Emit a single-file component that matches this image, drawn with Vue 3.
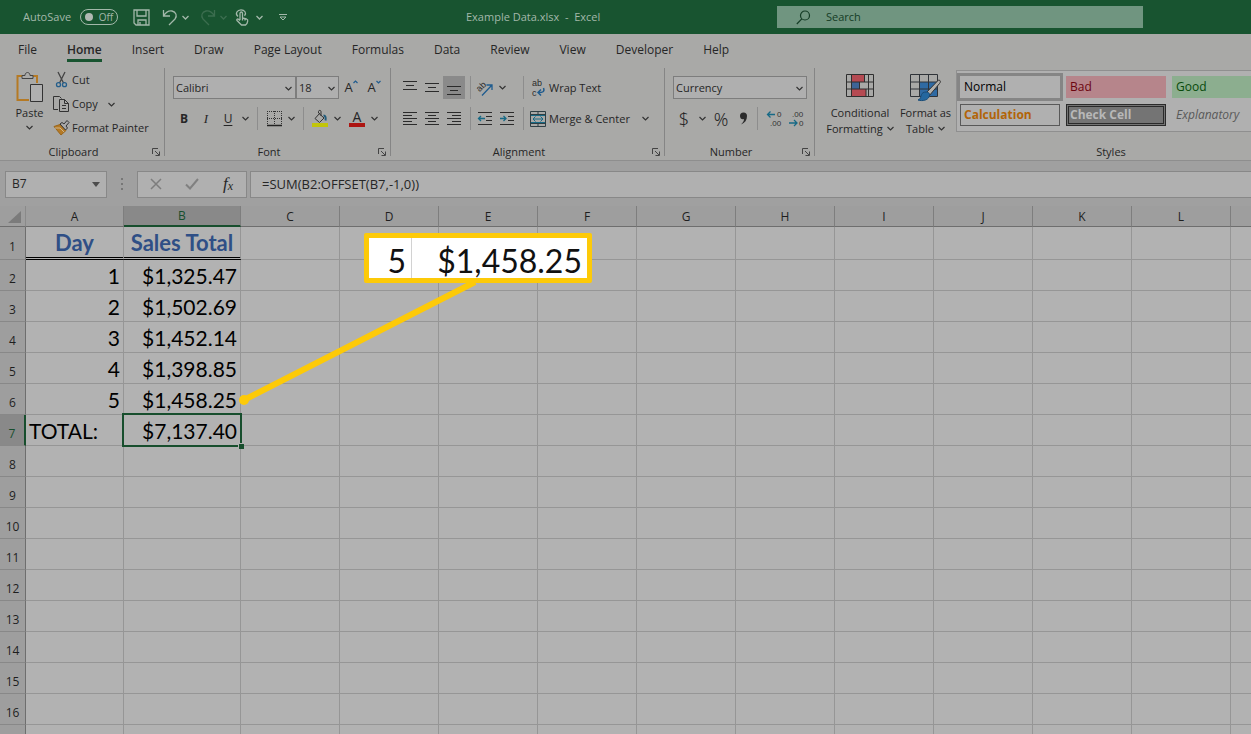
<script setup>
import { ref } from 'vue'

const tabs = ['File', 'Home', 'Insert', 'Draw', 'Page Layout', 'Formulas', 'Data', 'Review', 'View', 'Developer', 'Help']
const activeTab = ref('Home')
const columns = ['A', 'B', 'C', 'D', 'E', 'F', 'G', 'H', 'I', 'J', 'K', 'L', '']
const rows = ref([
  ['Day', 'Sales Total'],
  ['1', '$1,325.47'],
  ['2', '$1,502.69'],
  ['3', '$1,452.14'],
  ['4', '$1,398.85'],
  ['5', '$1,458.25'],
  ['TOTAL:', '$7,137.40'],
  [], [], [], [], [], [], [], [], [],
])
const formula = ref('=SUM(B2:OFFSET(B7,-1,0))')
const cellName = ref('B7')
const query = ref('')
const verticalAligns = [
  { name: 'Top align', d: 'M1 2.5h14M4 6.500h8M1 10.500h14' },
  { name: 'Middle align', d: 'M1 4.500h14M4 8.500h8M1 12.500h14' },
  { name: 'Bottom align', d: 'M1 7.500h14M4 11.500h8M1 15.500h14' },
]
const horizontalAligns = [
  { name: 'Align left', d: 'M1 1.500h14M1 4.500h9M1 7.500h14M1 10.500h9M1 13.500h14' },
  { name: 'Center', d: 'M1 1.500h14M4 4.500h8M1 7.500h14M4 10.500h8M1 13.500h14' },
  { name: 'Align right', d: 'M1 1.500h14M6 4.500h9M1 7.500h14M6 10.500h9M1 13.500h14' },
]
</script>

<template>
  <div class="app">
    <header class="titlebar">
      <div class="quick">
        <label class="autosave" for="autosave">AutoSave</label>
        <button id="autosave" class="toggle" type="button"><span class="knob"></span>Off</button>
        <button class="q save" type="button" aria-label="Save">
          <svg width="17" height="17" viewBox="0 0 17 17"><path d="M1 1h15v15H3l-2-2zM4 1v6h9V1M5 16v-5h8v5M7 13v3" /></svg>
        </button>
        <button class="q undo" type="button" aria-label="Undo">
          <svg width="16" height="17" viewBox="0 0 16 17"><path d="M1.500 1v6H8M1.500 7C4 3 7 1.500 10 2c4 .7 5.500 5 3 8l-6 6" /></svg>
        </button>
        <button class="q drop" type="button" aria-label="Undo history"><svg width="7" height="5" viewBox="0 0 7 5"><path d="M.5 1l3 3 3-3" /></svg></button>
        <button class="q redo dim" type="button" aria-label="Redo">
          <svg width="16" height="17" viewBox="0 0 16 17"><path d="M14.500 1v6H8M14.500 7C12 3 9 1.500 6 2c-4 .7-5.500 5-3 8l6 6" /></svg>
        </button>
        <button class="q drop dim" type="button" aria-label="Redo history"><svg width="7" height="5" viewBox="0 0 7 5"><path d="M.5 1l3 3 3-3" /></svg></button>
        <button class="q touch" type="button" aria-label="Touch mode">
          <svg width="14" height="17" viewBox="0 0 14 17"><path d="M5 11V4.500c0-2 2.500-2 2.500 0V9l4 1c1 .3 1.500 1 1.200 2L12 14.500 10.500 16h-4L2 11.500c-.8-1 .5-2 1.500-1.200L5 11.500M7.500 9v2.500M10 9.500v2M3 7.500C-.5 4.500 2.500.8 6 .8s6 3.200 3.500 6" /></svg>
        </button>
        <button class="q drop" type="button" aria-label="Touch options"><svg width="7" height="5" viewBox="0 0 7 5"><path d="M.5 1l3 3 3-3" /></svg></button>
        <button class="q custom" type="button" aria-label="Customize toolbar"><svg width="8" height="8" viewBox="0 0 8 8"><path d="M0 1.500h8M1 4l3 3 3-3z" /></svg></button>
      </div>
      <div class="doc-title">Example Data.xlsx&nbsp; -&nbsp; Excel</div>
      <label class="search">
        <svg width="15" height="15" viewBox="0 0 15 15"><circle cx="9" cy="5.500" r="4.500" /><path d="M5.800 8.800L.8 14" /></svg>
        <input v-model="query" type="text" placeholder="Search" aria-label="Search" />
      </label>
    </header>

    <nav class="tabs">
      <button v-for="t in tabs" :key="t" type="button" class="tab" :class="{ active: t === activeTab }" @click="activeTab = t">{{ t }}</button>
    </nav>

    <section class="ribbon">
      <div class="group clipboard">
        <div class="body">
          <button class="paste" type="button">
            <svg width="28" height="31" viewBox="0 0 28 31">
              <path d="M6 4H1.500v24H13M16 4h5v7" fill="none" stroke="#b57a25" stroke-width="2" />
              <path d="M6 6.500V3.500h3c0-4 5-4 5 0h3v3z" fill="#aaaaa8" stroke="#444" />
              <path d="M14.500 12.500h12v17h-12z" fill="#b0b0b0" stroke="#333" />
            </svg>
            <span>Paste</span>
            <svg class="chev" width="7" height="5" viewBox="0 0 7 5"><path d="M.5 1l3 3 3-3" /></svg>
          </button>
          <div class="clip-list">
            <button type="button" class="line">
              <svg width="18" height="16" viewBox="0 0 18 16"><path d="M5 0l5.500 11M12 0L6.500 11" fill="none" stroke="#444" stroke-width="1.300" /><circle cx="5.500" cy="12.700" r="2" fill="none" stroke="#245e8b" stroke-width="1.300" /><circle cx="11.500" cy="12.700" r="2" fill="none" stroke="#245e8b" stroke-width="1.300" /></svg>
              Cut
            </button>
            <button type="button" class="line">
              <svg width="18" height="16" viewBox="0 0 18 16"><path d="M5 13.500H.5v-13h6l2 2M6.500 3.500h5l4 4v8h-9zM11.500 3.500v4h4M9 9.500h4M9 12.500h4" fill="none" stroke="#333" /></svg>
              Copy
              <svg class="chev after" width="7" height="5" viewBox="0 0 7 5"><path d="M.5 1l3 3 3-3" /></svg>
            </button>
            <button type="button" class="line">
              <svg width="18" height="16" viewBox="0 0 18 16"><path d="M1 6.500l6-2 6 6-5 4.500z" fill="#b57a25" stroke="#9a661b" /><path d="M2 8l5 0 4 4" fill="none" stroke="#ccb58f" /><path d="M7 4l2-1.500 2 1.500 3-3.500 2 2L13 6l1.500 2-2 2z" fill="#aaa" stroke="#333" /></svg>
              Format Painter
            </button>
          </div>
        </div>
        <footer><span>Clipboard</span><button class="launch" type="button" aria-label="Clipboard settings"><svg width="8" height="8" viewBox="0 0 8 8"><path d="M.5 6V.5H6M3 3l4 4M7.500 3.500v4h-4" /></svg></button></footer>
      </div>

      <div class="group font">
        <div class="stack">
          <div class="row">
            <span class="pick family"><select aria-label="Font"><option>Calibri</option></select><svg class="chev" width="7" height="5" viewBox="0 0 7 5"><path d="M.5 1l3 3 3-3" /></svg></span>
            <span class="pick size"><select aria-label="Font size"><option>18</option></select><svg class="chev" width="7" height="5" viewBox="0 0 7 5"><path d="M.5 1l3 3 3-3" /></svg></span>
            <button class="ic grow" type="button" aria-label="Increase font size"><span>A</span><svg width="5" height="4" viewBox="0 0 5 4"><path d="M.5 3l2-2 2 2" /></svg></button>
            <button class="ic grow" type="button" aria-label="Decrease font size"><span>A</span><svg width="5" height="4" viewBox="0 0 5 4"><path d="M.5 1l2 2 2-2" /></svg></button>
          </div>
          <div class="row">
            <button class="ic bold" type="button">B</button>
            <button class="ic italic" type="button">I</button>
            <button class="ic under" type="button">U</button>
            <button class="dd" type="button" aria-label="Underline styles"><svg class="chev" width="7" height="5" viewBox="0 0 7 5"><path d="M.5 1l3 3 3-3" /></svg></button>
            <i class="sep"></i>
            <button class="ic" type="button" aria-label="Borders"><svg width="15" height="16" viewBox="0 0 15 16"><path d="M.5 0v14M14.500 0v14M7.500 0v14M0 .5h15M0 7.500h15" fill="none" stroke="#333" stroke-dasharray="1 1" /><path d="M0 14.500h15" stroke="#222" stroke-width="1.500" /></svg></button>
            <button class="dd" type="button" aria-label="Border styles"><svg class="chev" width="7" height="5" viewBox="0 0 7 5"><path d="M.5 1l3 3 3-3" /></svg></button>
            <i class="sep"></i>
            <button class="ic" type="button" aria-label="Fill color"><svg width="16" height="17" viewBox="0 0 16 17"><path d="M0 13h16v4H0z" fill="#c2c50a" /><path d="M8 3L3 8.500l4.500 4L12 8 6.500 3V1.500c0-1.500 2.500-1.500 2.500 0V6" fill="none" stroke="#333" /><path d="M11.500 5.500c2 0 2.500 2 2 5" fill="none" stroke="#205b7b" stroke-width="2" /></svg></button>
            <button class="dd" type="button" aria-label="Fill colors"><svg class="chev" width="7" height="5" viewBox="0 0 7 5"><path d="M.5 1l3 3 3-3" /></svg></button>
            <button class="ic fontcolor" type="button" aria-label="Font color"><span>A</span></button>
            <button class="dd" type="button" aria-label="Font colors"><svg class="chev" width="7" height="5" viewBox="0 0 7 5"><path d="M.5 1l3 3 3-3" /></svg></button>
          </div>
        </div>
        <footer><span>Font</span><button class="launch" type="button" aria-label="Font settings"><svg width="8" height="8" viewBox="0 0 8 8"><path d="M.5 6V.5H6M3 3l4 4M7.500 3.500v4h-4" /></svg></button></footer>
      </div>

      <div class="group alignment">
        <div class="stack">
          <div class="row">
            <button v-for="a in verticalAligns" :key="a.name" class="ic" :class="{ on: a.name === 'Bottom align' }" type="button" :aria-label="a.name"><svg width="16" height="18" viewBox="0 0 16 18"><path :d="a.d" stroke="#2b2b2b" /></svg></button>
            <i class="sep near"></i>
            <button class="ic" type="button" aria-label="Orientation"><svg width="18" height="18" viewBox="0 0 18 18"><text class="tiny" x="1" y="11" transform="rotate(-45 5 9)">ab</text><path d="M6 16.500L15.500 6.500M10.500 6h5.500v5" fill="none" stroke="#1f5c8f" stroke-width="1.300" /></svg></button>
            <button class="dd" type="button" aria-label="Orientation options"><svg class="chev" width="7" height="5" viewBox="0 0 7 5"><path d="M.5 1l3 3 3-3" /></svg></button>
            <i class="sep wide"></i>
            <button class="line" type="button"><svg width="16" height="20" viewBox="0 0 16 20"><text class="tiny" x="2" y="8">ab</text><text class="tiny" x="2" y="18">c</text><path d="M13.500 10c1.500 4-1 4.500-5 4.500M11 11.500l-3 3 3 3" fill="none" stroke="#1f5c8f" stroke-width="1.500" /></svg>Wrap Text</button>
          </div>
          <div class="row">
            <button v-for="a in horizontalAligns" :key="a.name" class="ic" type="button" :aria-label="a.name"><svg width="16" height="15" viewBox="0 0 16 15"><path :d="a.d" stroke="#2b2b2b" /></svg></button>
            <i class="sep near"></i>
            <button class="ic" type="button" aria-label="Decrease indent"><svg width="16" height="15" viewBox="0 0 16 15"><path d="M1 1.500h14M9 5.500h6M9 9.500h6M1 13.500h14" stroke="#2b2b2b" /><path d="M8 7.500H1.500M4 5L1.500 7.500 4 10" fill="none" stroke="#176a86" stroke-width="1.300" /></svg></button>
            <button class="ic" type="button" aria-label="Increase indent"><svg width="16" height="15" viewBox="0 0 16 15"><path d="M1 1.500h14M9 5.500h6M9 9.500h6M1 13.500h14" stroke="#2b2b2b" /><path d="M1 7.500h6M4.500 5L7 7.500 4.500 10" fill="none" stroke="#176a86" stroke-width="1.300" /></svg></button>
            <i class="sep merge"></i>
            <button class="line" type="button"><svg width="16" height="16" viewBox="0 0 16 16"><path d="M.5.5h15v15H.5zM.5 3.500h15M.5 12.500h15M8 0v3.500M8 12.500V16" fill="none" stroke="#2f3f44" /><path d="M1 4.500h14M1 11.500h14M3 8h10M5.500 5.500L3 8l2.500 2.500M10.500 5.500L13 8l-2.500 2.500" fill="none" stroke="#176a86" /></svg>Merge &amp; Center<svg class="chev after" width="7" height="5" viewBox="0 0 7 5"><path d="M.5 1l3 3 3-3" /></svg></button>
          </div>
        </div>
        <footer><span>Alignment</span><button class="launch" type="button" aria-label="Alignment settings"><svg width="8" height="8" viewBox="0 0 8 8"><path d="M.5 6V.5H6M3 3l4 4M7.500 3.500v4h-4" /></svg></button></footer>
      </div>

      <div class="group number">
        <div class="stack">
          <div class="row">
            <span class="pick format"><select aria-label="Number format"><option>Currency</option></select><svg class="chev" width="7" height="5" viewBox="0 0 7 5"><path d="M.5 1l3 3 3-3" /></svg></span>
          </div>
          <div class="row">
            <button class="ic big" type="button">$</button>
            <button class="dd acc" type="button" aria-label="Accounting formats"><svg class="chev" width="7" height="5" viewBox="0 0 7 5"><path d="M.5 1l3 3 3-3" /></svg></button>
            <button class="ic big" type="button">%</button>
            <button class="ic" type="button" aria-label="Comma style"><svg width="9" height="13" viewBox="0 0 9 13"><path d="M1 4a3.300 3.300 0 1 1 7 0c0 4-2 7-6 8.500C4 10.500 5 9 5 7 3 8 1 6.500 1 4z" fill="#2b2b2b" /></svg></button>
            <i class="sep near"></i>
            <button class="ic" type="button" aria-label="Increase decimal"><svg width="17" height="19" viewBox="0 0 17 19"><text class="dec" x="11" y="8">0</text><text class="dec" x="4" y="17">.00</text><path d="M9 5.500H1.500M4.500 2.500l-3 3 3 3" fill="none" stroke="#176a86" stroke-width="1.300" /></svg></button>
            <button class="ic" type="button" aria-label="Decrease decimal"><svg width="17" height="19" viewBox="0 0 17 19"><text class="dec" x="4" y="8">.00</text><text class="dec" x="11" y="17">0</text><path d="M1 14h8M6 11l3 3-3 3" fill="none" stroke="#176a86" stroke-width="1.300" /></svg></button>
          </div>
        </div>
        <footer><span>Number</span><button class="launch" type="button" aria-label="Number settings"><svg width="8" height="8" viewBox="0 0 8 8"><path d="M.5 6V.5H6M3 3l4 4M7.500 3.500v4h-4" /></svg></button></footer>
      </div>

      <div class="group styles">
        <div class="body">
          <button class="tall cond" type="button">
            <svg width="28" height="23" viewBox="0 0 28 23"><path d="M6 1h12v7H6zM6 15h14v7H6z" fill="#b54a52" /><path d="M6 8h7v7H6z" fill="#3d6496" /><path d="M.5.5h27v22H.5zM.5 8h27M.5 15h27M5.500 0v22M18.500 0v8M13.500 8v7M20 15v7M22.500 0v22" fill="none" stroke="#2f2f2f" /></svg>
            <span>Conditional<br />Formatting<svg class="chev" width="7" height="5" viewBox="0 0 7 5"><path d="M.5 1l3 3 3-3" /></svg></span>
          </button>
          <button class="tall fmt" type="button">
            <svg width="31" height="28" viewBox="0 0 31 28"><path d="M10 8h17v14H10z" fill="#2f6aa3" /><path d="M.5.5h27v22H.5zM.5 8h27M.5 15h27M9.500 0v22M18.500 0v22" fill="none" stroke="#2f3338" /><path d="M28.500 6c2 0 2.500 2 1 3.500L19 22l-3-3z" fill="#b4b0aa" stroke="#333" /><path d="M16 18c3 0 4.500 2 3 5-1.500 3-6 4.500-11 3 3-1 2.500-3 3.500-5.500.7-1.500 2-2.500 4.500-2.500z" fill="#24679f" stroke="#194c78" /></svg>
            <span>Format as<br />Table<svg class="chev" width="7" height="5" viewBox="0 0 7 5"><path d="M.5 1l3 3 3-3" /></svg></span>
          </button>
          <div class="gallery">
            <button type="button" class="normal">Normal</button>
            <button type="button" class="bad">Bad</button>
            <button type="button" class="good">Good</button>
            <button type="button" class="calc">Calculation</button>
            <button type="button" class="check">Check Cell</button>
            <button type="button" class="expl">Explanatory</button>
          </div>
        </div>
        <footer><span>Styles</span></footer>
      </div>
    </section>

    <section class="formula-bar">
      <label class="name-box"><input v-model="cellName" type="text" aria-label="Name box" /><svg width="8" height="5" viewBox="0 0 8 5"><path d="M0 0h8L4 5z" fill="#4d4d4d" /></svg></label>
      <svg class="dots" width="3" height="12" viewBox="0 0 3 12"><path d="M0 0h2v2H0zM0 5h2v2H0zM0 10h2v2H0z" fill="#777" /></svg>
      <div class="fx-box">
        <button type="button" aria-label="Cancel"><svg width="12" height="12" viewBox="0 0 12 12"><path d="M1 1l10 10M11 1L1 11" stroke="#7d7d7d" stroke-width="1.500" /></svg></button>
        <button type="button" aria-label="Enter"><svg width="14" height="12" viewBox="0 0 14 12"><path d="M1 6.500l4 4L13 1" fill="none" stroke="#808080" stroke-width="2" /></svg></button>
        <button type="button" class="fx" aria-label="Insert function">f<small>x</small></button>
      </div>
      <input v-model="formula" class="formula" type="text" aria-label="Formula" />
    </section>

    <main class="sheet">
      <table>
        <colgroup>
          <col class="c-head" /><col class="c-a" /><col class="c-b" />
          <col v-for="n in 11" :key="n" class="c-std" />
        </colgroup>
        <thead>
          <tr>
            <th class="corner"><svg width="13" height="12" viewBox="0 0 13 12"><path d="M13 0v12H0z" fill="#7b7b7b" /></svg></th>
            <th v-for="c in columns" :key="c" scope="col" :class="{ current: c === 'B' }">{{ c }}</th>
          </tr>
        </thead>
        <tbody>
          <tr v-for="(r, i) in rows" :key="i" :class="{ first: i === 0 }">
            <th scope="row" :class="{ current: i === 6 }">{{ i + 1 }}</th>
            <td v-for="(c, j) in columns" :key="j" :class="{ heading: i === 0 && j < 2, text: i === 6 && j === 0, selected: i === 6 && j === 1 }">{{ r[j] }}</td>
          </tr>
          <tr><th></th><td v-for="c in columns" :key="c"></td></tr>
        </tbody>
      </table>
      <svg class="pointer" width="240" height="126" viewBox="0 0 240 126"><path d="M5 119L236 1" stroke="#fdca08" stroke-width="6" /><circle cx="5" cy="119" r="5" fill="#fdca08" /></svg>
      <div class="callout"><span class="day">5</span><span class="amount">$1,458.25</span></div>
    </main>
  </div>
</template>

<style>
body {
  margin: 0;
  overflow: hidden;
}
</style>

<style scoped>
.app {
  height: 100vh;
  display: flex;
  flex-direction: column;
  overflow: hidden;
  background: #a0a0a0;
  color: #262626;
  font: 11px/16px "Open Sans", "Noto Sans", sans-serif;
}
* { box-sizing: border-box; }
button, input, select {
  font: inherit;
  color: inherit;
  background: none;
  border: 0;
  padding: 0;
  margin: 0;
  border-radius: 0;
  outline: 0;
}
button { display: flex; align-items: center; justify-content: center; flex: none; white-space: nowrap; }
svg { display: block; flex: none; overflow: visible; }
.chev { fill: none; stroke: #333; stroke-width: 1.2; }

/* title bar */
.titlebar {
  height: 34px;
  flex: none;
  display: grid;
  grid-template-columns: 466px 311px minmax(120px, 366px) 1fr;
  align-items: center;
  background: #185430;
  color: #a3b8aa;
}
.quick { display: flex; align-items: center; padding-left: 23px; }
.autosave { width: 57px; }
.toggle { width: 38px; height: 16px; border: 1px solid #a3b8aa; border-radius: 8px; font-size: 10px; gap: 6px; }
.knob { width: 8px; height: 8px; border-radius: 50%; background: #b0b8b3; }
.q svg { fill: none; stroke: #a3b8aa; stroke-width: 1.3; }
.dim { opacity: 0.25; }
.save { margin-left: 15px; }
.undo { margin-left: 12px; }
.drop { margin-left: 4px; }
.redo { margin-left: 11px; }
.touch { margin-left: 8px; }
.touch + .drop { margin-left: 7px; }
.custom { margin-left: 16px; }
.q.custom svg { stroke-width: 1; }
.search { display: flex; align-items: center; height: 22px; padding-left: 19px; background: #709580; color: #143c25; }
.search svg { fill: none; stroke: #143c25; stroke-width: 1.2; }
.search input { flex: 1; min-width: 0; margin-left: 15px; }
.search input::placeholder { color: #143c25; opacity: 1; }

/* tabs */
.tabs { flex: none; display: flex; gap: 30px; height: 30px; padding-left: 18px; background: #a9a9a7; font-size: 12px; }
.tab { height: 28px; border-bottom: 3px solid transparent; padding-top: 6px; }
.active { font-weight: 600; border-color: #185430; }

/* ribbon */
.ribbon { flex: none; display: flex; height: 97px; background: #a9a9a7; border-bottom: 1px solid #8e8e8e; overflow: hidden; }
.group { flex: none; display: flex; flex-direction: column; position: relative; }
.group:not(.styles)::after { content: ""; position: absolute; right: 0; top: 4px; bottom: 4px; width: 1px; background: #858585; }
.clipboard { width: 165px; }
.font { width: 226px; }
.alignment { width: 274px; }
.number { width: 150px; }
.styles { flex: 1 0 436px; }
.body { display: flex; flex: 1; }
footer { display: flex; height: 18px; padding: 2px 5px 0 0; align-items: center; }
footer span { flex: 1; text-align: center; padding-right: 5px; }
.launch svg { fill: none; stroke: #444; }
.font footer span { padding-right: 5px; }
.styles footer { padding-left: 145px; }
.paste { flex-direction: column; justify-content: flex-start; width: 53px; padding: 8px 0 0 6px; }
.paste span { margin-top: 2px; }
.paste .chev { margin-top: 4px; align-self: center; }
.clip-list { display: flex; flex-direction: column; padding-top: 4px; }
.clip-list .line { height: 24px; justify-content: flex-start; gap: 1px; }
.line { gap: 1px; }
.after { margin-left: 9px; }
.stack { flex: 1; display: flex; flex-direction: column; gap: 8px; padding: 12px 0 0 8px; }
.row { display: flex; align-items: center; height: 23px; }
.pick { position: relative; display: flex; height: 23px; border: 1px solid #7d7d7d; background: #afafaf; }
.pick select { appearance: none; width: 100%; padding: 0 14px 0 2px; }
.pick .chev { position: absolute; right: 3px; top: 9px; pointer-events: none; }
.family { width: 123px; }
.size { width: 43px; }
.format { width: 134px; }
.ic { width: 22px; height: 23px; }
.on { background: #8a8a8a; }
.grow { align-items: flex-start; font-size: 13px; line-height: 22px; margin-left: 1px; }
.grow svg { margin-top: 4px; fill: none; stroke: #1f5c8f; stroke-width: 1.2; }
.bold { font-weight: 700; font-size: 12px; }
.italic { font: italic 13px "Liberation Serif", serif; }
.under { font-size: 12px; text-decoration: underline; text-underline-offset: 2px; }
.fontcolor { margin-left: 3px; font-size: 14px; }
.fontcolor span { width: 16px; height: 17px; line-height: 13px; border-bottom: 4px solid #ad1511; }
.dd { width: 12px; height: 23px; }
.sep { width: 1px; height: 23px; background: #8d8d8d; margin: 0 5px 0 6px; flex: none; }
.near { margin: 0 3px 0 5px; }
.number .near { margin: 0 5px 0 3px; }
.wide { margin: 0 6px 0 15px; }
.merge { margin: 0 6px 0 5px; }
.alignment .line { gap: 3px; }
.acc { margin: 0 2px 0 1px; }
.big { font-size: 18px; font-family: "Noto Sans", sans-serif; font-weight: 300; }
.tiny { font: 9px "Liberation Sans", sans-serif; fill: #2b2b2b; }
.dec { font: 8px "Liberation Sans", sans-serif; fill: #333; }
.tall { flex-direction: column; justify-content: flex-start; padding-top: 10px; }
.tall span { display: block; }
.tall .chev { display: inline-block; margin: 0 0 2px 4px; }
.cond { width: 70px; margin-left: 10px; }
.cond > span { margin-top: 8px; }
.fmt { width: 61px; }
.fmt > span { margin-top: 3px; }
.gallery {
  flex: 1;
  display: grid;
  grid-template-columns: 100px 100px 100px;
  grid-auto-rows: 22px;
  gap: 6px;
  height: 62px;
  margin-top: 6px;
  padding: 5px 0 0 3px;
  border: 1px solid #8f8f8f;
  border-right: 0;
  background: #b0b0b0;
  overflow: hidden;
  font: 12px/16px "Open Sans", "Noto Sans", sans-serif;
}
.gallery button { justify-content: flex-start; padding-left: 4px; }
.normal { color: #000; box-shadow: 0 0 0 3px #858585; }
.bad { background: #b6858b; color: #6c0410; }
.good { background: #8cae8f; color: #084a0b; }
.gallery .calc { color: #b26408; border: 1px solid #595959; font-weight: 700; padding-left: 3px; }
.gallery .check { background: #747474; color: #b8b8b8; border: 3px double #2a2a2a; font-weight: 700; padding-left: 1px; }
.expl { color: #595959; font-style: italic; }

/* formula bar */
.formula-bar { flex: none; display: flex; align-items: center; height: 45px; padding: 1px 0 0 5px; }
.name-box, .fx-box, .formula { height: 27px; background: #b0b0b0; border: 1px solid #888; }
.name-box { width: 102px; display: flex; align-items: center; padding: 0 6px; font-size: 12px; }
.name-box input { flex: 1; min-width: 0; }
.dots { margin: 0 13px 0 14px; }
.fx-box { display: flex; width: 110px; }
.fx-box button { width: 36px; }
.fx { font: italic 17px "Liberation Serif", serif; }
.fx small { font-size: 12px; margin-top: 4px; }
.formula { flex: 1; min-width: 0; margin-left: 3px; padding-left: 11px; border-right: 0; font-size: 13px; }

/* sheet */
.sheet { flex: 1; position: relative; overflow: hidden; font-family: Lato, sans-serif; }
table { table-layout: fixed; width: 1330px; border-collapse: separate; border-spacing: 0; }
.c-head { width: 26px; }
.c-a { width: 98px; }
.c-b { width: 117px; }
.c-std { width: 99px; }
th { padding: 0; font: 12px/16px "Open Sans", "Noto Sans", sans-serif; background: #9e9e9e; color: #1e1e1e; border-right: 1px solid #7e7e7e; border-bottom: 1px solid #6e6e6e; }
thead th { height: 21px; padding-top: 1px; }
thead .corner { padding-left: 8px; border-right-color: #8a8a8a; }
thead .current { background: #898989; color: #174e2d; border-bottom: 2px solid #174e2d; }
tbody th { height: 31px; padding-top: 8px; border-bottom-color: #888; border-right-color: #6e6e6e; }
tbody .current { background: #898989; color: #174e2d; border-right: 2px solid #174e2d; }
.first th { height: 33px; }
td { padding: 2px 3px 0 0; background: #b2b2b2; color: #000; border-right: 1px solid #969696; border-bottom: 1px solid #969696; font-size: 21px; line-height: 26px; text-align: right; white-space: nowrap; }
.heading { padding: 2px 0 0; border-bottom: 3px double #000; color: #2f4f86; font-size: 22px; font-weight: 700; text-align: center; }
.text { text-align: left; padding-left: 3px; }
.selected { position: relative; z-index: 1; }
.selected::before { content: ""; position: absolute; inset: -2px; border: 2px solid #174e2d; }
.selected::after { content: ""; position: absolute; right: -4px; bottom: -4px; width: 5px; height: 5px; background: #174e2d; border: solid #b2b2b2; border-width: 1px 0 0 1px; box-sizing: content-box; }
.pointer { position: absolute; left: 239px; top: 75px; z-index: 2; }
.callout { position: absolute; z-index: 2; left: 364px; top: 27px; width: 228px; height: 50px; display: flex; border: 5px solid #fdca08; border-radius: 2px; background: #fff; color: #111; font-size: 32px; line-height: 45px; }
.day { width: 43px; padding-right: 5px; text-align: right; border-right: 1px solid #d2d2d2; }
.amount { flex: 1; text-align: right; padding-right: 5px; }
</style>
